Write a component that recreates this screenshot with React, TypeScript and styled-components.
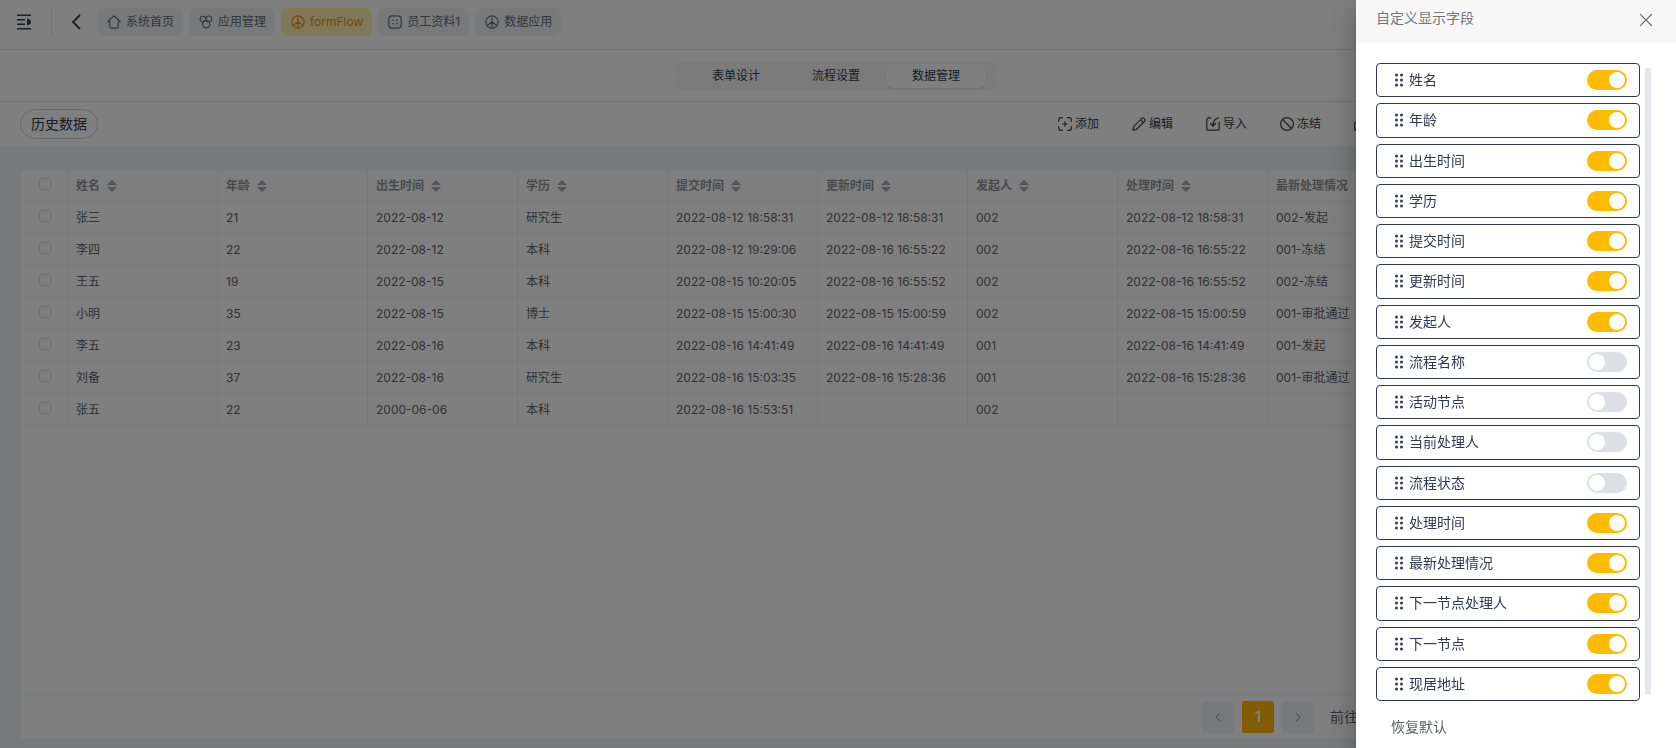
import React from "react";
import styled, { createGlobalStyle, css } from "styled-components";

const Global = createGlobalStyle`
  *, *::before, *::after { box-sizing: border-box; }
  html, body, #root { height: 100%; }
  body {
    margin: 0;
    font-family: Inter, "Noto Sans CJK SC", sans-serif;
    font-size: 12px;
    line-height: 16px;
    color: #606266;
    overflow: hidden;
  }
  button, input { font: inherit; color: inherit; }
  button { border: 0; background: none; padding: 0; cursor: pointer; }
  svg { display: block; flex: none; }
`;

const Page = styled.div`
  display: flex;
  flex-direction: column;
  height: 100vh;
  min-height: 640px;
  background: #f0f2f5;
`;

const Header = styled.header`
  display: flex;
  align-items: flex-start;
  height: 50px;
  padding: 8px 16px;
  background: #fff;
  border-bottom: 1px solid #e4e7ed;
`;

const IconButton = styled.button`
  display: flex;
  align-items: center;
  justify-content: center;
  height: 28px;
  color: #303a4f;
`;

const Divider = styled.span`
  width: 1px;
  height: 28px;
  margin: 0 19px;
  background: #e4e7ed;
`;

const Tabs = styled.nav`
  display: flex;
  gap: 6px;
  margin-left: 16px;
`;

const Tab = styled.a<{ $active?: boolean }>`
  display: flex;
  align-items: center;
  gap: 5px;
  height: 28px;
  padding: 0 9px 0 10px;
  border-radius: 6px;
  white-space: nowrap;
  text-decoration: none;
  background: ${(p) => (p.$active ? "#fff3b0" : "#f0f2f5")};
  color: ${(p) => (p.$active ? "#e6900a" : "#666c78")};
`;

const ModeBar = styled.div`
  display: flex;
  justify-content: center;
  height: 52px;
  padding: 12px 4px 0 0;
  background: #fff;
  border-bottom: 1px solid #e4e7ed;
`;

const Segments = styled.div`
  display: flex;
  height: 28px;
  padding: 2px 10px;
  border-radius: 8px;
  background: #f7f7f7;
`;

const Segment = styled.button<{ $active?: boolean }>`
  width: 100px;
  border-radius: 8px;
  color: #303a4f;
  ${(p) =>
    p.$active &&
    css`
      background: #fff;
      box-shadow: 0 1px 2px rgba(0, 0, 0, 0.1);
    `}
`;

const Toolbar = styled.div`
  display: flex;
  align-items: center;
  justify-content: space-between;
  height: 44px;
  padding: 0 281px 0 20px;
  background: #fff;
`;

const Pill = styled.button`
  height: 30px;
  padding: 0 10px;
  border: 1px solid #cdd0d6;
  border-radius: 15px;
  font-size: 14px;
  color: #303a4f;
`;

const Actions = styled.div`
  display: flex;
  gap: 33px;
`;

const Action = styled.button`
  display: flex;
  align-items: center;
  gap: 3px;
  white-space: nowrap;
  color: #404040;
`;

const Card = styled.main`
  display: flex;
  flex: 1;
  flex-direction: column;
  min-height: 0;
  margin: 24px 20px 8px;
  overflow: hidden;
  background: #fff;
  border: 1px solid #ebeef5;
`;

const TableArea = styled.div`
  flex: 1;
  overflow: hidden;
`;

const Table = styled.table`
  width: 100%;
  table-layout: fixed;
  border-collapse: separate;
  border-spacing: 0;

  th, td {
    height: 32px;
    padding: 0 8px;
    text-align: left;
    white-space: nowrap;
    border-right: 1px solid #ebeef5;
    border-bottom: 1px solid #ebeef5;
  }
  th { height: 31px; font-weight: 700; color: #909399; }
`;

const CheckCell = styled.div`
  display: flex;
  justify-content: center;
  padding: 0 0 4px 2px;
`;

const Check = styled.input`
  appearance: none;
  width: 12px;
  height: 12px;
  margin: 0;
  border: 1px solid #dcdfe6;
  border-radius: 2px;
  background: #fff;
`;

const HeadLabel = styled.span`
  display: flex;
  align-items: center;
  gap: 7px;
`;

const Pager = styled.footer`
  display: flex;
  align-items: center;
  justify-content: flex-end;
  gap: 8px;
  height: 45px;
  padding-right: 239px;
  border-top: 1px solid #ebeef5;
  font-size: 14px;
`;

const PageButton = styled.button<{ $active?: boolean }>`
  display: flex;
  align-items: center;
  justify-content: center;
  width: 32px;
  height: 32px;
  border-radius: 2px;
  font-weight: 700;
  background: ${(p) => (p.$active ? "#ffbb00" : "#f0f2f5")};
  color: ${(p) => (p.$active ? "#fff" : "#909399")};
`;

const Jump = styled.label`
  display: flex;
  align-items: center;
  gap: 8px;
  margin-left: 8px;
`;

const JumpInput = styled.input`
  width: 50px;
  height: 28px;
  border: 1px solid #dcdfe6;
  border-radius: 4px;
  text-align: center;
`;

const Overlay = styled.div`
  position: fixed;
  inset: 0;
  display: flex;
  justify-content: flex-end;
  background: rgba(0, 0, 0, 0.5);
`;

const Drawer = styled.aside`
  display: flex;
  flex-direction: column;
  width: 320px;
  height: 100%;
  background: #fff;
  box-shadow: 0 8px 10px -5px rgba(0, 0, 0, 0.2), 0 16px 24px 2px rgba(0, 0, 0, 0.14),
    0 6px 30px 5px rgba(0, 0, 0, 0.12);
`;

const DrawerHead = styled.div`
  display: flex;
  align-items: center;
  justify-content: space-between;
  height: 43px;
  padding: 0 24px 4px 20px;
  background: #f7f7f7;
`;

const DrawerTitle = styled.h2`
  margin: 0;
  padding-bottom: 4px;
  font-size: 14px;
  font-weight: 400;
  color: #72767b;
`;

const DrawerBody = styled.div`
  display: flex;
  flex: 1;
  gap: 5px;
  min-height: 0;
  padding: 20px 25px 0 20px;
`;

const FieldList = styled.ul`
  display: grid;
  flex: 1;
  grid-auto-rows: 1fr;
  gap: 6px;
  margin: 0;
  padding: 0;
  list-style: none;
`;

const Field = styled.li`
  display: flex;
  border: 1px solid #303a4f;
  border-radius: 4px;
`;

const FieldLabel = styled.label`
  display: flex;
  flex: 1;
  align-items: center;
  gap: 6px;
  padding: 0 12px 0 18px;
  font-size: 14px;
  color: #303a4f;
`;

const Switch = styled.input`
  appearance: none;
  display: flex;
  align-items: center;
  width: 40px;
  height: 20px;
  margin: 0 0 0 auto;
  padding: 0 2px;
  border-radius: 10px;
  background: #dcdfe6;

  &::before {
    content: "";
    width: 16px;
    height: 16px;
    border-radius: 50%;
    background: #fff;
  }
  &:checked {
    justify-content: flex-end;
    background: #ffbb00;
  }
`;

const ScrollThumb = styled.div`
  width: 6px;
  margin: 5px 0 6px;
  border-radius: 3px;
  background: #e4e7ed;
`;

const DrawerFoot = styled.div`
  display: flex;
  align-items: center;
  height: 47px;
  padding: 4px 35px 0;
  font-size: 14px;
`;

const Icon = ({ children }: { children: React.ReactNode }) => (
  <svg width="14" height="14" viewBox="0 0 14 14" fill="none" stroke="currentColor" strokeWidth="1.2" strokeLinecap="round" strokeLinejoin="round" aria-hidden="true">
    {children}
  </svg>
);

const MenuIcon = () => (
  <svg width="16" height="16" viewBox="0 0 16 16" fill="none" stroke="currentColor" strokeWidth="1.4" aria-hidden="true">
    <path d="M1 1.2h14M1 5.8h8M1 10.2h8M1 14.8h14" />
    <path d="M11 4.500c2 .3 4 1.800 4 3.500s-2 3.200-4 3.500z" fill="currentColor" stroke="none" />
  </svg>
);
const BackIcon = () => (
  <svg width="10" height="16" viewBox="0 0 10 16" fill="none" stroke="currentColor" strokeWidth="1.8" aria-hidden="true">
    <path d="M9 1L2 8l7 7" />
  </svg>
);
const HomeIcon = () => (
  <Icon><path d="M7 .9L.9 6.200q-.3.500.3.500h1.300L3 12.100q.1 1 1 1h6q.9 0 1-1l.5-5.400h1.300q.6 0 .3-.5z" /></Icon>
);
const CirclesIcon = () => (
  <Icon>
    <path d="M5.600 6.300A2.800 2.800 0 1 1 6.600 3.200" />
    <circle cx="9.800" cy="4" r="3" />
    <circle cx="7.200" cy="9.300" r="3.600" />
  </Icon>
);
const PeaceIcon = () => (
  <Icon>
    <circle cx="7" cy="7" r="6.200" />
    <path d="M7 2.800v10M7 6.800L3.200 9.800M7 6.800l3.800 3" />
  </Icon>
);
const GridIcon = () => (
  <Icon>
    <rect x=".8" y=".8" width="12.400" height="12.400" rx="3.500" />
    <path d="M5 5.200h.2M8.800 5.200h.2M5 8.800h.2M8.800 8.800h.2" strokeWidth="1.600" />
  </Icon>
);
const AddIcon = () => (
  <Icon>
    <path d="M.7 4.500V2.700a2 2 0 0 1 2-2h1.800M9.500.7h1.800a2 2 0 0 1 2 2v1.800M13.300 9.500v1.800a2 2 0 0 1-2 2H9.500M4.500 13.300H2.700a2 2 0 0 1-2-2V9.500M7 4.800v4.400M4.800 7h4.400" />
  </Icon>
);
const EditIcon = () => (
  <Icon><path d="M.8 13.200l1-3.800L9.800 1.300q1-.9 2 0l.9.900q.9 1 0 2L4.500 12.300zM8.500 2.700l2.800 2.800" /></Icon>
);
const ImportIcon = () => (
  <Icon>
    <path d="M5 .8H2.800a2 2 0 0 0-2 2v8.400a2 2 0 0 0 2 2h8.400a2 2 0 0 0 2-2V5" />
    <path d="M12.500.8Q7 2 7 8.500M4.500 6.500L7 9l2.500-2.500" />
  </Icon>
);
const BanIcon = () => (
  <Icon>
    <circle cx="7" cy="7" r="6.400" />
    <path d="M2.500 2.500l9 9" />
  </Icon>
);
const ExportIcon = () => (
  <Icon><path d="M5 4.500H2.600a2 2 0 0 0-2 2v4.900a2 2 0 0 0 2 2h8.800a2 2 0 0 0 2-2V6.500a2 2 0 0 0-2-2H9M7 9V.8M4.500 3L7 .8 9.500 3" /></Icon>
);
const SortIcon = () => (
  <svg width="10" height="12" viewBox="0 0 10 12" fill="#a8abb2" aria-hidden="true">
    <path d="M5 0l5 5H0zM5 12L0 7h10z" />
  </svg>
);
const Chevron = ({ next }: { next?: boolean }) => (
  <svg width="6" height="10" viewBox="0 0 6 10" fill="none" stroke="currentColor" aria-hidden="true">
    <path d={next ? "M1 1l4 4-4 4" : "M5 1L1 5l4 4"} />
  </svg>
);
const CloseIcon = () => (
  <svg width="12" height="12" viewBox="0 0 12 12" fill="none" stroke="#606266" strokeWidth="1.2" aria-hidden="true">
    <path d="M0 0l12 12M12 0L0 12" />
  </svg>
);
const DragIcon = () => (
  <svg width="8" height="14" viewBox="0 0 8 14" fill="#303a4f" aria-hidden="true">
    {[2, 7, 12].map((y) => (
      <React.Fragment key={y}>
        <circle cx="1.5" cy={y} r="1.5" />
        <circle cx="6.5" cy={y} r="1.5" />
      </React.Fragment>
    ))}
  </svg>
);

const tabs = [
  { label: "系统首页", icon: <HomeIcon /> },
  { label: "应用管理", icon: <CirclesIcon /> },
  { label: "formFlow", icon: <PeaceIcon />, active: true },
  { label: "员工资料1", icon: <GridIcon /> },
  { label: "数据应用", icon: <PeaceIcon /> },
];

const actions = [
  { label: "添加", icon: <AddIcon /> },
  { label: "编辑", icon: <EditIcon /> },
  { label: "导入", icon: <ImportIcon /> },
  { label: "冻结", icon: <BanIcon /> },
  { label: "导出", icon: <ExportIcon /> },
];

const columns = ["姓名", "年龄", "出生时间", "学历", "提交时间", "更新时间", "发起人", "处理时间", "最新处理情况"];

const rows = [
  ["张三", "21", "2022-08-12", "研究生", "2022-08-12 18:58:31", "2022-08-12 18:58:31", "002", "2022-08-12 18:58:31", "002-发起"],
  ["李四", "22", "2022-08-12", "本科", "2022-08-12 19:29:06", "2022-08-16 16:55:22", "002", "2022-08-16 16:55:22", "001-冻结"],
  ["王五", "19", "2022-08-15", "本科", "2022-08-15 10:20:05", "2022-08-16 16:55:52", "002", "2022-08-16 16:55:52", "002-冻结"],
  ["小明", "35", "2022-08-15", "博士", "2022-08-15 15:00:30", "2022-08-15 15:00:59", "002", "2022-08-15 15:00:59", "001-审批通过"],
  ["李五", "23", "2022-08-16", "本科", "2022-08-16 14:41:49", "2022-08-16 14:41:49", "001", "2022-08-16 14:41:49", "001-发起"],
  ["刘备", "37", "2022-08-16", "研究生", "2022-08-16 15:03:35", "2022-08-16 15:28:36", "001", "2022-08-16 15:28:36", "001-审批通过"],
  ["张五", "22", "2000-06-06", "本科", "2022-08-16 15:53:51", "", "002", "", ""],
];

const fields: [string, boolean][] = [
  ["姓名", true],
  ["年龄", true],
  ["出生时间", true],
  ["学历", true],
  ["提交时间", true],
  ["更新时间", true],
  ["发起人", true],
  ["流程名称", false],
  ["活动节点", false],
  ["当前处理人", false],
  ["流程状态", false],
  ["处理时间", true],
  ["最新处理情况", true],
  ["下一节点处理人", true],
  ["下一节点", true],
  ["现居地址", true],
];

export default function App() {
  return (
    <>
      <Global />
      <Page>
        <Header>
          <IconButton aria-label="菜单"><MenuIcon /></IconButton>
          <Divider />
          <IconButton aria-label="返回"><BackIcon /></IconButton>
          <Tabs>
            {tabs.map((t) => (
              <Tab key={t.label} href="#" $active={t.active}>{t.icon}{t.label}</Tab>
            ))}
          </Tabs>
        </Header>
        <ModeBar>
          <Segments>
            <Segment>表单设计</Segment>
            <Segment>流程设置</Segment>
            <Segment $active>数据管理</Segment>
          </Segments>
        </ModeBar>
        <Toolbar>
          <Pill>历史数据</Pill>
          <Actions>
            {actions.map((a) => (
              <Action key={a.label}>{a.icon}{a.label}</Action>
            ))}
          </Actions>
        </Toolbar>
        <Card>
          <TableArea>
            <Table>
              <colgroup>
                <col width="47" />
                {columns.map((c) => <col key={c} width="150" />)}
                <col />
              </colgroup>
              <thead>
                <tr>
                  <th><CheckCell><Check type="checkbox" aria-label="全选" /></CheckCell></th>
                  {columns.map((c) => (
                    <th key={c}><HeadLabel>{c}<SortIcon /></HeadLabel></th>
                  ))}
                  <th />
                </tr>
              </thead>
              <tbody>
                {rows.map((r) => (
                  <tr key={r[4]}>
                    <td><CheckCell><Check type="checkbox" aria-label={r[0]} /></CheckCell></td>
                    {r.map((v, i) => <td key={columns[i]}>{v}</td>)}
                    <td />
                  </tr>
                ))}
              </tbody>
            </Table>
          </TableArea>
          <Pager>
            <PageButton aria-label="上一页"><Chevron /></PageButton>
            <PageButton $active>1</PageButton>
            <PageButton aria-label="下一页"><Chevron next /></PageButton>
            <Jump>前往<JumpInput type="text" defaultValue="1" /></Jump>
          </Pager>
        </Card>
      </Page>
      <Overlay>
        <Drawer>
          <DrawerHead>
            <DrawerTitle>自定义显示字段</DrawerTitle>
            <IconButton aria-label="关闭"><CloseIcon /></IconButton>
          </DrawerHead>
          <DrawerBody>
            <FieldList>
              {fields.map(([name, on]) => (
                <Field key={name}>
                  <FieldLabel>
                    <DragIcon />
                    {name}
                    <Switch type="checkbox" role="switch" defaultChecked={on} />
                  </FieldLabel>
                </Field>
              ))}
            </FieldList>
            <ScrollThumb />
          </DrawerBody>
          <DrawerFoot>
            <button type="button">恢复默认</button>
          </DrawerFoot>
        </Drawer>
      </Overlay>
    </>
  );
}
